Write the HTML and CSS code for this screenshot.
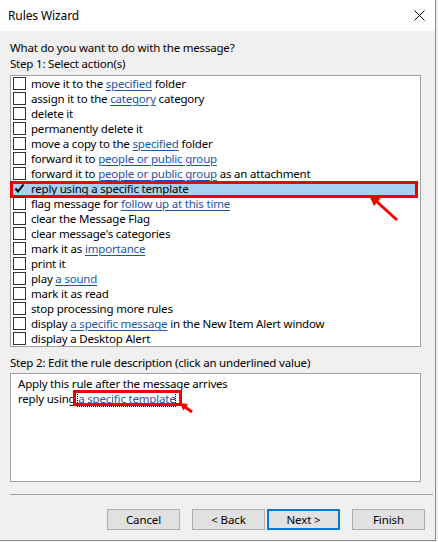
FILE: index.html
```html
<!DOCTYPE html>
<html>
<head>
<meta charset="utf-8">
<link rel="stylesheet" href="styles.css">
</head>
<body>
<div class="window">
  <div class="titlebar">
    <span class="title">Rules Wizard</span>
    <svg class="close" width="11" height="11" viewBox="0 0 11 11"><path d="M0.5 0.5 L10.5 10.5 M10.5 0.5 L0.5 10.5" stroke="#000" stroke-width="1" fill="none"/></svg>
  </div>
  <div class="content">
    <div class="label">What do you want to do with the message?</div>
    <div class="label">Step 1: Select action(s)</div>
    <ul class="listbox">
      <li class="row"><span class="cb"></span><span>move it to the <a class="lnk">specified</a> folder</span></li>
      <li class="row"><span class="cb"></span><span>assign it to the <a class="lnk">category</a> category</span></li>
      <li class="row"><span class="cb"></span><span>delete it</span></li>
      <li class="row"><span class="cb"></span><span>permanently delete it</span></li>
      <li class="row"><span class="cb"></span><span>move a copy to the <a class="lnk">specified</a> folder</span></li>
      <li class="row"><span class="cb"></span><span>forward it to <a class="lnk">people or public group</a></span></li>
      <li class="row"><span class="cb"></span><span>forward it to <a class="lnk">people or public group</a> as an attachment</span></li>
      <li class="row selected"><span class="cb"><svg width="11" height="11" viewBox="0 0 11 11"><path d="M1.5 5.5 L4 8.5 L9.5 1.5" stroke="#000" stroke-width="2" fill="none"/></svg></span><span>reply using <a class="lnk sel">a specific template</a></span></li>
      <li class="row"><span class="cb"></span><span>flag message for <a class="lnk">follow up at this time</a></span></li>
      <li class="row"><span class="cb"></span><span>clear the Message Flag</span></li>
      <li class="row"><span class="cb"></span><span>clear message's categories</span></li>
      <li class="row"><span class="cb"></span><span>mark it as <a class="lnk">importance</a></span></li>
      <li class="row"><span class="cb"></span><span>print it</span></li>
      <li class="row"><span class="cb"></span><span>play <a class="lnk">a sound</a></span></li>
      <li class="row"><span class="cb"></span><span>mark it as read</span></li>
      <li class="row"><span class="cb"></span><span>stop processing more rules</span></li>
      <li class="row"><span class="cb"></span><span>display <a class="lnk">a specific message</a> in the New Item Alert window</span></li>
      <li class="row"><span class="cb"></span><span>display a Desktop Alert</span></li>
    </ul>
    <div class="label step2">Step 2: Edit the rule description (click an underlined value)</div>
    <div class="desc">
      <div class="dline">Apply this rule after the message arrives</div>
      <div class="dline">reply using <span class="tpl"><a class="lnk focus">a specific template</a></span></div>
    </div>
    <div class="sep"></div>
    <div class="buttons">
      <button class="btn">Cancel</button>
      <button class="btn back">&lt; Back</button>
      <button class="btn next">Next &gt;</button>
      <button class="btn finish">Finish</button>
    </div>
  </div>
  <svg class="arrow1" width="45" height="45" viewBox="0 0 45 45">
    <line x1="37" y1="35" x2="15" y2="15" stroke="#ee0000" stroke-width="3"/>
    <polygon points="9,10 20.5,13.6 13.9,21" fill="#ee0000"/>
  </svg>
  <svg class="arrow2" width="20" height="18" viewBox="0 0 20 18">
    <line x1="17" y1="14" x2="10" y2="9" stroke="#ee0000" stroke-width="3"/>
    <polygon points="5,5 13,6 8.2,12.4" fill="#ee0000"/>
  </svg>
</div>
</body>
</html>
```

FILE: styles.css
```css
html, body {
  margin: 0;
  padding: 0;
  background: #f0f0f0;
}
body {
  font-family: "Noto Sans", "Open Sans", sans-serif;
  font-size: 11.5px;
  letter-spacing: -0.2px;
  color: #000;
}
.window {
  position: relative;
  width: 435px;
  height: 540px;
  border-right: 1px solid #8a8a8a;
  border-bottom: 1px solid #8a8a8a;
  background: #f0f0f0;
  display: flex;
  flex-direction: column;
}
.titlebar {
  height: 31px;
  background: #fff;
  display: flex;
  align-items: center;
  justify-content: space-between;
  padding: 0 10px 0 8px;
  flex: none;
}
.title {
  font-size: 12px;
  letter-spacing: -0.1px;
  margin-top: -1px;
}
.close {
  margin-top: -1px;
}
.content {
  padding: 9px 0 0 10px;
  display: flex;
  flex-direction: column;
}
.label {
  line-height: 16px;
  height: 16px;
  white-space: nowrap;
}
.listbox {
  list-style: none;
  margin: 3px 0 0 0;
  padding: 0;
  width: 411px;
  box-sizing: border-box;
  border: 1px solid #a0a0a0;
  background: #fff;
}
.row {
  display: flex;
  align-items: center;
  height: 15px;
  line-height: 15px;
  white-space: nowrap;
  padding-left: 2px;
  position: relative;
}
.cb {
  width: 13px;
  height: 13px;
  box-sizing: border-box;
  border: 1px solid #333;
  background: #fff;
  margin-right: 5px;
  flex: none;
  display: flex;
  align-items: center;
  justify-content: center;
}
.selected {
  background: #a8d0f0;
  margin-right: 5px;
}
.selected .cb {
  border-color: transparent;
  background: transparent;
}
.selected::after {
  content: "";
  position: absolute;
  left: -1px;
  top: 0;
  right: -3px;
  bottom: -2px;
  border: 3px solid #ee0000;
}
.lnk {
  color: #1c56a6;
  text-decoration: underline;
  text-underline-offset: 2px;
}
.lnk.sel {
  color: #000;
}
.step2 {
  margin-top: 8px;
}
.desc {
  margin-top: 2px;
  width: 411px;
  height: 109px;
  box-sizing: border-box;
  border: 1px solid #a0a0a0;
  background: #fff;
  padding: 2px 0 0 7px;
}
.dline {
  line-height: 15px;
  height: 15px;
  white-space: nowrap;
}
.tpl {
  position: relative;
}
.tpl::after {
  content: "";
  position: absolute;
  left: -5px;
  right: -7px;
  top: -1px;
  bottom: 0px;
  border: 3px solid #ee0000;
}
.focus {
  outline: 1px dotted #000;
  outline-offset: 0;
}
.sep {
  margin-top: 12px;
  width: 423px;
  height: 1px;
  background: #a0a0a0;
}
.buttons {
  margin-top: 14px;
  width: 415px;
  display: flex;
  justify-content: flex-end;
}
.btn {
  width: 73px;
  height: 21px;
  box-sizing: border-box;
  border: 1px solid #adadad;
  background: #e1e1e1;
  font-family: "Noto Sans", "Open Sans", sans-serif;
  font-size: 11.5px;
  letter-spacing: -0.1px;
  color: #000;
  padding: 0;
  line-height: 17px;
}
.back, .finish {
  margin-left: 12px;
}
.next {
  margin-left: 2px;
  border: 2px solid #0078d7;
}
.arrow1 {
  position: absolute;
  left: 360px;
  top: 185px;
}
.arrow2 {
  position: absolute;
  left: 175px;
  top: 398px;
}
```
